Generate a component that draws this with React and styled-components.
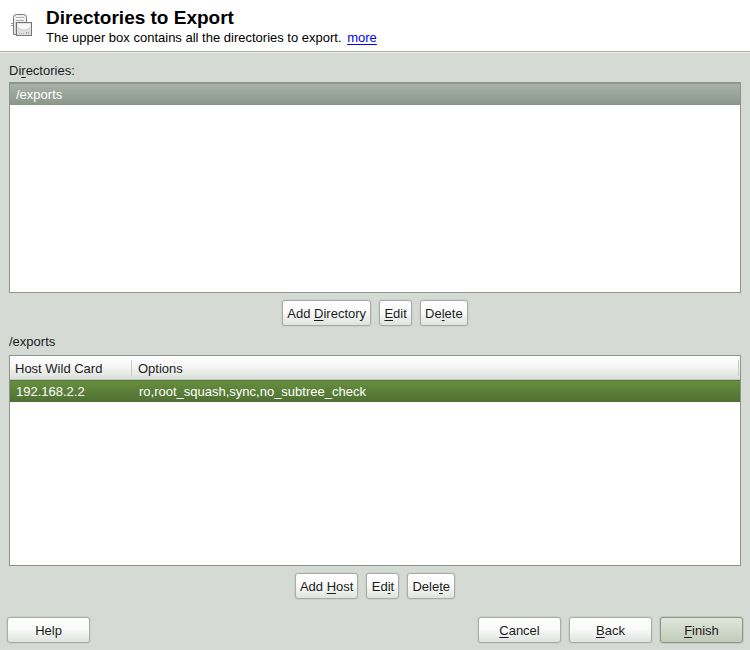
import React, { useState } from "react";
import styled, { createGlobalStyle } from "styled-components";

const GlobalStyle = createGlobalStyle`
  * { box-sizing: border-box; }
  body {
    margin: 0;
    background: #d5dad4;
    color: #1c1c1c;
    font-family: "Liberation Sans", Arial, sans-serif;
    font-size: 13px;
  }
`;

const Page = styled.div`
  min-height: 100vh;
  display: flex;
  flex-direction: column;
`;

const Header = styled.header`
  display: flex;
  align-items: flex-start;
  gap: 12px;
  padding: 7px 10px 4px;
  background: #fff;
  color: #000;
  border-bottom: 1px solid #a9b1a8;
  box-shadow: 0 1px 0 #eaede9;
`;

const HeaderIcon = styled.svg`
  flex: none;
  width: 24px;
  height: 24px;
  margin-top: 6px;
`;

const Title = styled.h1`
  margin: 0;
  font-size: 19px;
  line-height: 22px;
  font-weight: bold;
`;

const Intro = styled.p`
  margin: 0;
  font-size: 13px;
  line-height: 18px;
`;

const MoreLink = styled.a`
  margin-left: 2px;
  color: #0000ee;
  text-underline-offset: 2px;
`;

const Main = styled.main`
  flex: 1;
  display: flex;
  flex-direction: column;
  padding: 10px 9px 0;
`;

const Section = styled.section`
  flex: 1 1 auto;
  display: flex;
  flex-direction: column;
  padding-bottom: 7px;
`;

const Caption = styled.h2`
  margin: 0 0 ${(p) => (p.$loose ? 4 : 2)}px;
  font-size: 13px;
  line-height: 18px;
  font-weight: normal;
`;

const Frame = styled.div`
  flex: 1 0 120px;
  background: #fff;
  border: 1px solid #8b958b;
`;

const List = styled.ul`
  margin: 0;
  padding: 0;
  list-style: none;
`;

const ListItem = styled.li`
  height: 22px;
  padding: 0 6px;
  line-height: 22px;
  color: #fff;
  background: linear-gradient(#a9b1a9, #8b968b);
  border-top: 1px solid #8f998f;
`;

const Table = styled.table`
  width: 100%;
  border-collapse: separate;
  border-spacing: 0;
  table-layout: fixed;
`;

const HeadCell = styled.th`
  position: relative;
  width: ${(p) => p.$width || "auto"};
  height: 24px;
  padding: 2px 5px 0;
  text-align: left;
  font-weight: normal;
  background: linear-gradient(#ffffff, #f4f5f4 50%, #dbdfda);
  border-bottom: 1px solid #c5cac4;

  &::after {
    content: "";
    position: absolute;
    top: 4px;
    bottom: 3px;
    right: 1px;
    width: 1px;
    background: #c4ccc4;
  }
`;

const HostRow = styled.tr`
  color: #fff;
  background: linear-gradient(#67903f, #4f7034);
`;

const Cell = styled.td`
  height: 22px;
  padding: 0 6px;
  border-top: 1px solid #567538;
`;

const Actions = styled.div`
  display: flex;
  justify-content: center;
  gap: 8px;
  padding-top: 7px;
`;

const Button = styled.button`
  height: 26px;
  min-width: ${(p) => (p.$wide ? 83 : 33)}px;
  padding: 0 4px;
  font: inherit;
  color: inherit;
  white-space: nowrap;
  border: 1px solid ${(p) => (p.$primary ? "#8b978a" : "#a5ada4")};
  border-radius: 3px;
  background: ${(p) =>
    p.$primary
      ? "linear-gradient(#dfe5db, #d1d9ca 50%, #c2ccb8)"
      : "linear-gradient(#ffffff, #f8f9f8 50%, #dfe3de)"};
  box-shadow: 0 0 0 1px ${(p) => (p.$primary ? "#c2cac0" : "#cbd1ca")};
`;

const Footer = styled.footer`
  display: flex;
  justify-content: space-between;
  padding: 11px 7px 7px;
`;

const FooterGroup = styled.div`
  display: flex;
  gap: 8px;
`;

const Key = styled.u`
  text-underline-offset: 2px;
`;

function ServerIcon() {
  return (
    <HeaderIcon viewBox="0 0 24 24" aria-hidden="true">
      <path d="M1 10.5h3M1 12.5h3" stroke="#999" />
      <path d="M3.5 21.5V4.5Q3.5 1.5 6.5 1.5H13.5Q16.5 1.5 16.5 4.5V21.5Z" fill="#eeeeee" stroke="#777" />
      <path d="M6 4.5H14M6 7.5H14" stroke="#b0b0b0" />
      <path d="M6 5.5H14" stroke="#fff" />
      <path d="M5.5 9V20" stroke="#cfcfcf" />
      <rect x="6.5" y="9.5" width="15" height="13" fill="#e0e0e0" stroke="#777" />
      <path d="M8 11H20V15Q14 19 8 15Z" fill="#f8f8f8" />
      <path d="M8 15Q14 19 20 15" fill="none" stroke="#cccccc" />
      <path d="M9 20.5H15" stroke="#a5a5a5" strokeDasharray="1 1" />
      <path d="M16.5 19V21M18.5 19V21" stroke="#a5a5a5" />
    </HeaderIcon>
  );
}

const directories = ["/exports"];
const hosts = [{ wildCard: "192.168.2.2", options: "ro,root_squash,sync,no_subtree_check" }];

export default function App() {
  const [selected] = useState(directories[0]);
  return (
    <>
      <GlobalStyle />
      <Page>
        <Header>
          <ServerIcon />
          <div>
            <Title>Directories to Export</Title>
            <Intro>
              The upper box contains all the directories to export. <MoreLink href="#more">more</MoreLink>
            </Intro>
          </div>
        </Header>
        <Main>
          <Section>
            <Caption id="directories-label">
              Di<Key>r</Key>ectories:
            </Caption>
            <Frame>
              <List role="listbox" aria-labelledby="directories-label">
                {directories.map((d) => (
                  <ListItem key={d} role="option" aria-selected={d === selected}>
                    {d}
                  </ListItem>
                ))}
              </List>
            </Frame>
            <Actions>
              <Button type="button">Add <Key>D</Key>irectory</Button>
              <Button type="button"><Key>E</Key>dit</Button>
              <Button type="button">De<Key>l</Key>ete</Button>
            </Actions>
          </Section>
          <Section>
            <Caption id="hosts-label" $loose>{selected}</Caption>
            <Frame>
              <Table aria-labelledby="hosts-label">
                <thead>
                  <tr>
                    <HeadCell $width="123px">Host Wild Card</HeadCell>
                    <HeadCell>Options</HeadCell>
                  </tr>
                </thead>
                <tbody>
                  {hosts.map((h) => (
                    <HostRow key={h.wildCard}>
                      <Cell>{h.wildCard}</Cell>
                      <Cell>{h.options}</Cell>
                    </HostRow>
                  ))}
                </tbody>
              </Table>
            </Frame>
            <Actions>
              <Button type="button">Add <Key>H</Key>ost</Button>
              <Button type="button">Ed<Key>i</Key>t</Button>
              <Button type="button">Dele<Key>t</Key>e</Button>
            </Actions>
          </Section>
        </Main>
        <Footer>
          <Button type="button" $wide>Help</Button>
          <FooterGroup>
            <Button type="button" $wide><Key>C</Key>ancel</Button>
            <Button type="button" $wide><Key>B</Key>ack</Button>
            <Button type="button" $wide $primary><Key>F</Key>inish</Button>
          </FooterGroup>
        </Footer>
      </Page>
    </>
  );
}
